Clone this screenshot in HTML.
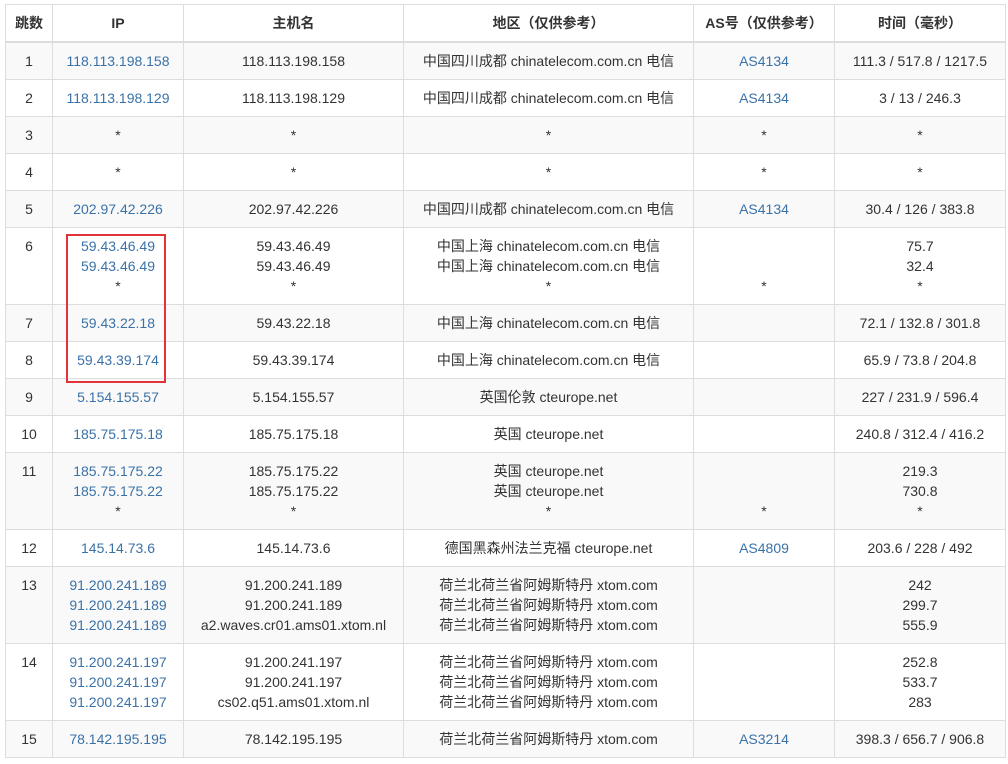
<!DOCTYPE html>
<html><head><meta charset="utf-8"><style>
body{margin:0;background:#fff;font-family:"Liberation Sans","Noto Sans CJK SC",sans-serif;font-size:14px;color:#333;}
table{position:absolute;left:5px;top:4px;border-collapse:collapse;table-layout:fixed;width:1000px;}
td,th{border:1px solid #ddd;text-align:center;vertical-align:top;padding:8px 0 8px;line-height:20px;white-space:nowrap;overflow:hidden;}
th{font-weight:bold;border-bottom:2px solid #ddd;padding:8px 0 8px;}
tbody tr:nth-child(odd){background:#f9f9f9;}
a{color:#3a72a8;text-decoration:none;}
#box{position:absolute;left:66px;top:234px;width:96px;height:145px;border:2px solid #e0343a;}
</style></head><body>
<table>
<colgroup><col style="width:47px"><col style="width:131px"><col style="width:220px"><col style="width:290px"><col style="width:141px"><col style="width:171px"></colgroup>
<thead><tr><th>跳数</th><th>IP</th><th>主机名</th><th>地区（仅供参考）</th><th>AS号（仅供参考）</th><th>时间（毫秒）</th></tr></thead>
<tbody>
<tr><td>1</td><td><a>118.113.198.158</a></td><td>118.113.198.158</td><td>中国四川成都 chinatelecom.com.cn 电信</td><td><a>AS4134</a></td><td>111.3 / 517.8 / 1217.5</td></tr>
<tr><td>2</td><td><a>118.113.198.129</a></td><td>118.113.198.129</td><td>中国四川成都 chinatelecom.com.cn 电信</td><td><a>AS4134</a></td><td>3 / 13 / 246.3</td></tr>
<tr><td>3</td><td>*</td><td>*</td><td>*</td><td>*</td><td>*</td></tr>
<tr><td>4</td><td>*</td><td>*</td><td>*</td><td>*</td><td>*</td></tr>
<tr><td>5</td><td><a>202.97.42.226</a></td><td>202.97.42.226</td><td>中国四川成都 chinatelecom.com.cn 电信</td><td><a>AS4134</a></td><td>30.4 / 126 / 383.8</td></tr>
<tr><td>6</td><td><a>59.43.46.49</a><br><a>59.43.46.49</a><br>*</td><td>59.43.46.49<br>59.43.46.49<br>*</td><td>中国上海 chinatelecom.com.cn 电信<br>中国上海 chinatelecom.com.cn 电信<br>*</td><td>&nbsp;<br>&nbsp;<br>*</td><td>75.7<br>32.4<br>*</td></tr>
<tr><td>7</td><td><a>59.43.22.18</a></td><td>59.43.22.18</td><td>中国上海 chinatelecom.com.cn 电信</td><td></td><td>72.1 / 132.8 / 301.8</td></tr>
<tr><td>8</td><td><a>59.43.39.174</a></td><td>59.43.39.174</td><td>中国上海 chinatelecom.com.cn 电信</td><td></td><td>65.9 / 73.8 / 204.8</td></tr>
<tr><td>9</td><td><a>5.154.155.57</a></td><td>5.154.155.57</td><td>英国伦敦 cteurope.net</td><td></td><td>227 / 231.9 / 596.4</td></tr>
<tr><td>10</td><td><a>185.75.175.18</a></td><td>185.75.175.18</td><td>英国 cteurope.net</td><td></td><td>240.8 / 312.4 / 416.2</td></tr>
<tr><td>11</td><td><a>185.75.175.22</a><br><a>185.75.175.22</a><br>*</td><td>185.75.175.22<br>185.75.175.22<br>*</td><td>英国 cteurope.net<br>英国 cteurope.net<br>*</td><td>&nbsp;<br>&nbsp;<br>*</td><td>219.3<br>730.8<br>*</td></tr>
<tr><td>12</td><td><a>145.14.73.6</a></td><td>145.14.73.6</td><td>德国黑森州法兰克福 cteurope.net</td><td><a>AS4809</a></td><td>203.6 / 228 / 492</td></tr>
<tr><td>13</td><td><a>91.200.241.189</a><br><a>91.200.241.189</a><br><a>91.200.241.189</a></td><td>91.200.241.189<br>91.200.241.189<br>a2.waves.cr01.ams01.xtom.nl</td><td>荷兰北荷兰省阿姆斯特丹 xtom.com<br>荷兰北荷兰省阿姆斯特丹 xtom.com<br>荷兰北荷兰省阿姆斯特丹 xtom.com</td><td></td><td>242<br>299.7<br>555.9</td></tr>
<tr><td>14</td><td><a>91.200.241.197</a><br><a>91.200.241.197</a><br><a>91.200.241.197</a></td><td>91.200.241.197<br>91.200.241.197<br>cs02.q51.ams01.xtom.nl</td><td>荷兰北荷兰省阿姆斯特丹 xtom.com<br>荷兰北荷兰省阿姆斯特丹 xtom.com<br>荷兰北荷兰省阿姆斯特丹 xtom.com</td><td></td><td>252.8<br>533.7<br>283</td></tr>
<tr><td>15</td><td><a>78.142.195.195</a></td><td>78.142.195.195</td><td>荷兰北荷兰省阿姆斯特丹 xtom.com</td><td><a>AS3214</a></td><td>398.3 / 656.7 / 906.8</td></tr>
</tbody></table>
<div id="box"></div>
</body></html>
